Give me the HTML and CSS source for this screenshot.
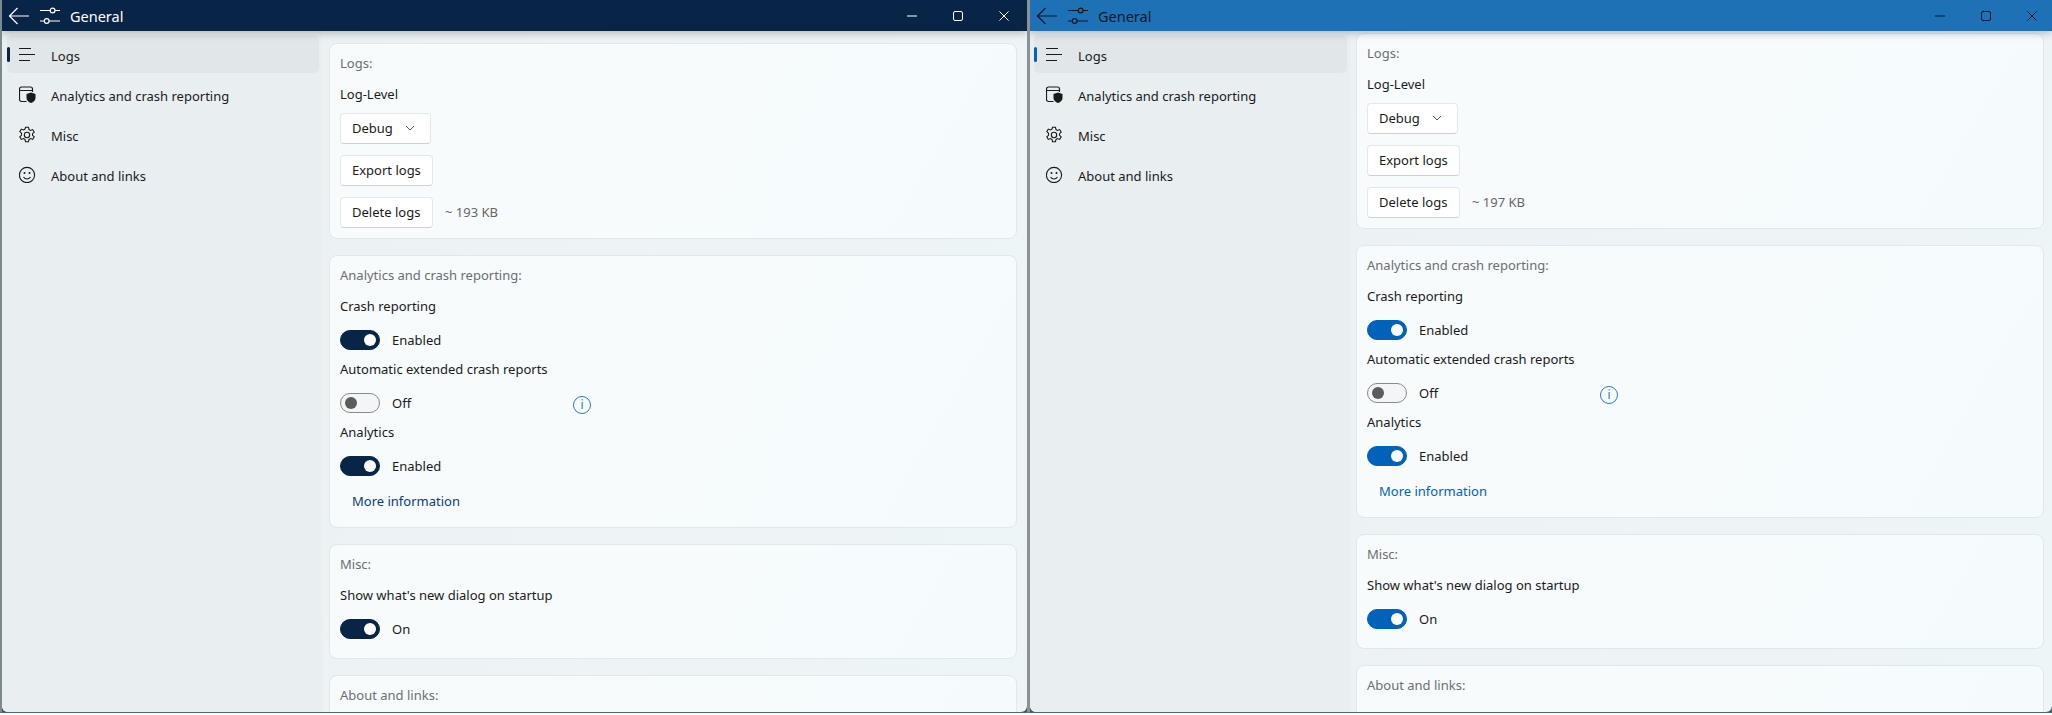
FILE: index.html
```html
<!DOCTYPE html>
<html lang="en">
<head>
    <meta charset="UTF-8">
    <meta name="viewport" content="width=device-width, initial-scale=1.0">
    <title>General</title>
    <link rel="stylesheet" href="styles.css">
</head>
<body>
    <svg class="icon-defs" width="0" height="0">
        <symbol id="i-back" viewBox="0 0 22 20"><path d="M21 10H1.500M9.500 2l-8 8 8 8" fill="none" stroke="currentColor" stroke-width="1.200"/></symbol>
        <symbol id="i-sliders" viewBox="0 0 22 20"><g fill="none" stroke="currentColor" stroke-width="1.200"><path d="M0 4.500h10.200M15 4.500h5M0 15h4.300M9.100 15h10.900"/><circle cx="12.600" cy="4.500" r="2.400"/><circle cx="6.700" cy="15" r="2.400"/></g></symbol>
        <symbol id="i-lines" viewBox="0 0 18 18"><path d="M0 3.500h12M0 9.500h16M0 15.500h11" fill="none" stroke="currentColor" stroke-width="1.100"/></symbol>
        <symbol id="i-shield" viewBox="1 -1 18 18"><path d="M8.500 15.500H3.500A2 2 0 0 1 1.500 13.500V3A2 2 0 0 1 3.500 1h9A2 2 0 0 1 14.500 3v3M1.500 4.500h13" fill="none" stroke="currentColor" stroke-width="1.200"/><path d="M13 6.500l4.500 1.500v4c0 2.500-2 4-4.500 5-2.500-1-4.500-2.500-4.500-5V8z" fill="currentColor"/></symbol>
        <symbol id="i-gear" viewBox="1 -1 18 18"><g fill="none" stroke="currentColor" stroke-width="1.100"><circle cx="9" cy="9" r="2.700"/><path d="M7.500 1.300h3l.5 2.300 1.500.8 2.200-.8 1.500 2.600-1.700 1.500v1.600l1.700 1.500-1.500 2.600-2.200-.8-1.500.8-.5 2.300h-3l-.5-2.300-1.500-.8-2.200.8-1.500-2.600 1.700-1.500V7.200L1.800 5.700l1.500-2.600 2.200.8 1.500-.8z"/></g></symbol>
        <symbol id="i-smile" viewBox="1 -1 18 18"><circle cx="9" cy="9" r="7.600" fill="none" stroke="currentColor" stroke-width="1.100"/><circle cx="6.500" cy="7" r="1" fill="currentColor"/><circle cx="11.500" cy="7" r="1" fill="currentColor"/><path d="M5.500 11c1 1.400 2.200 2 3.500 2s2.500-.6 3.500-2" fill="none" stroke="currentColor" stroke-width="1.100"/></symbol>
        <symbol id="i-min" viewBox="0 0 12 12"><path d="M1 6h10" stroke="currentColor" fill="none"/></symbol>
        <symbol id="i-max" viewBox="0 0 12 12"><rect x="1.500" y="1.500" width="9" height="9" rx="1.500" stroke="currentColor" fill="none"/></symbol>
        <symbol id="i-close" viewBox="0 0 12 12"><path d="M1.500 1.500l9 9M10.500 1.500l-9 9" stroke="currentColor" fill="none"/></symbol>
        <symbol id="i-chevron" viewBox="0 0 10 6"><path d="M1 1l4 4 4-4" stroke="currentColor" fill="none"/></symbol>
    </svg>

    <!-- dark theme accent window -->
    <div class="window win-dark">
        <header class="titlebar">
            <svg class="tb-icon"><use href="#i-back"/></svg>
            <svg class="tb-icon tb-last"><use href="#i-sliders"/></svg>
            <span class="tb-title">General</span>
            <div class="tb-buttons">
                <svg class="tb-btn"><use href="#i-min"/></svg>
                <svg class="tb-btn"><use href="#i-max"/></svg>
                <svg class="tb-btn"><use href="#i-close"/></svg>
            </div>
        </header>
        <div class="body-row">
            <nav class="sidebar">
                <div class="nav-item selected"><span class="nav-mark"></span><svg class="nav-icon"><use href="#i-lines"/></svg><span class="nav-text">Logs</span></div>
                <div class="nav-item"><svg class="nav-icon"><use href="#i-shield"/></svg><span class="nav-text">Analytics and crash reporting</span></div>
                <div class="nav-item"><svg class="nav-icon"><use href="#i-gear"/></svg><span class="nav-text">Misc</span></div>
                <div class="nav-item"><svg class="nav-icon"><use href="#i-smile"/></svg><span class="nav-text">About and links</span></div>
            </nav>
            <main class="content">
                <section class="card">
                    <div class="card-title">Logs:</div>
                    <div class="label">Log-Level</div>
                    <div class="btn combo">Debug<svg class="chevron"><use href="#i-chevron"/></svg></div>
                    <div class="btn">Export logs</div>
                    <div class="btn-row"><div class="btn">Delete logs</div><span class="size">~ 193 KB</span></div>
                </section>
                <section class="card">
                    <div class="card-title">Analytics and crash reporting:</div>
                    <div class="label">Crash reporting</div>
                    <div class="toggle-row"><span class="toggle on"></span>Enabled</div>
                    <div class="label tight">Automatic extended crash reports</div>
                    <div class="toggle-row"><span class="toggle"></span><span class="toggle-text">Off</span><span class="info">i</span></div>
                    <div class="label tight">Analytics</div>
                    <div class="toggle-row"><span class="toggle on"></span>Enabled</div>
                    <a class="link">More information</a>
                </section>
                <section class="card card-misc">
                    <div class="card-title">Misc:</div>
                    <div class="label">Show what's new dialog on startup</div>
                    <div class="toggle-row"><span class="toggle on"></span>On</div>
                </section>
                <section class="card card-about">
                    <div class="card-title">About and links:</div>
                </section>
            </main>
        </div>
    </div>

    <!-- blue accent window, scrolled down 10px -->
    <div class="window win-blue">
        <header class="titlebar">
            <svg class="tb-icon"><use href="#i-back"/></svg>
            <svg class="tb-icon tb-last"><use href="#i-sliders"/></svg>
            <span class="tb-title">General</span>
            <div class="tb-buttons">
                <svg class="tb-btn"><use href="#i-min"/></svg>
                <svg class="tb-btn"><use href="#i-max"/></svg>
                <svg class="tb-btn"><use href="#i-close"/></svg>
            </div>
        </header>
        <div class="body-row">
            <nav class="sidebar">
                <div class="nav-item selected"><span class="nav-mark"></span><svg class="nav-icon"><use href="#i-lines"/></svg><span class="nav-text">Logs</span></div>
                <div class="nav-item"><svg class="nav-icon"><use href="#i-shield"/></svg><span class="nav-text">Analytics and crash reporting</span></div>
                <div class="nav-item"><svg class="nav-icon"><use href="#i-gear"/></svg><span class="nav-text">Misc</span></div>
                <div class="nav-item"><svg class="nav-icon"><use href="#i-smile"/></svg><span class="nav-text">About and links</span></div>
            </nav>
            <main class="content">
                <section class="card">
                    <div class="card-title">Logs:</div>
                    <div class="label">Log-Level</div>
                    <div class="btn combo">Debug<svg class="chevron"><use href="#i-chevron"/></svg></div>
                    <div class="btn">Export logs</div>
                    <div class="btn-row"><div class="btn">Delete logs</div><span class="size">~ 197 KB</span></div>
                </section>
                <section class="card">
                    <div class="card-title">Analytics and crash reporting:</div>
                    <div class="label">Crash reporting</div>
                    <div class="toggle-row"><span class="toggle on"></span>Enabled</div>
                    <div class="label tight">Automatic extended crash reports</div>
                    <div class="toggle-row"><span class="toggle"></span><span class="toggle-text">Off</span><span class="info">i</span></div>
                    <div class="label tight">Analytics</div>
                    <div class="toggle-row"><span class="toggle on"></span>Enabled</div>
                    <a class="link">More information</a>
                </section>
                <section class="card card-misc">
                    <div class="card-title">Misc:</div>
                    <div class="label">Show what's new dialog on startup</div>
                    <div class="toggle-row"><span class="toggle on"></span>On</div>
                </section>
                <section class="card card-about">
                    <div class="card-title">About and links:</div>
                </section>
            </main>
        </div>
    </div>
</body>
</html>
```

FILE: styles.css
```css
html, body {
    height: 100%;
    margin: 0;
}
body {
    background-color: #fff;
    display: flex;
    font-family: "Noto Sans", Arial, sans-serif;
    font-size: 13px;
    color: #1a1a1a;
    overflow: hidden;
}
.icon-defs {
    position: absolute;
}
.window {
    height: 712px;
    display: flex;
    flex-direction: column;
    overflow: hidden;
    background-color: #3a5a66;
    border-bottom: 1px solid #50666e;
}
.win-dark {
    width: 1025px;
    border-left: 2px solid #7c8a90;
    border-right: 1px solid #8a9296;
    --accent: #082547;
    --bar: #082547;
    --bar-text: #fff;
    --link: #0f3d73;
    --btn-pad: 17px;
}
.win-blue {
    width: 1022px;
    border-left: 2px solid #8a9296;
    --accent: #0063b9;
    --bar: #1f71b5;
    --bar-text: #0a1a2a;
    --link: #0063b9;
    --btn-pad: 14px;
}

/* title bar */
.titlebar {
    height: 31px;
    flex: none;
    display: flex;
    align-items: center;
    background-color: var(--bar);
    color: var(--bar-text);
    padding-left: 6px;
    box-shadow: 0 2px 8px rgba(0, 0, 0, 0.25);
    position: relative;
    z-index: 1;
}
.tb-icon {
    width: 22px;
    height: 20px;
    margin-right: 10px;
}
.tb-last {
    margin-right: 8px;
}
.tb-title {
    font-size: 14.500px;
}
.tb-buttons {
    margin-left: auto;
    display: flex;
    gap: 34px;
    padding-right: var(--btn-pad);
}
.tb-btn {
    width: 12px;
    height: 12px;
}

/* sidebar */
.body-row {
    flex: 1;
    display: flex;
    min-height: 0;
    overflow: hidden;
    border-radius: 0 0 6px 6px;
    background: linear-gradient(100deg, #eaf0f2 0%, #eef3f5 60%, #edf5f7 100%);
}
.sidebar {
    width: 320px;
    flex: none;
    padding: 4px 3px 0 5px;
    box-sizing: border-box;
    background-color: #e9eff1;
}
.win-blue .sidebar {
    padding-left: 4px;
}
.nav-item {
    height: 38px;
    margin-bottom: 2px;
    display: flex;
    align-items: center;
    padding-left: 12px;
    border-radius: 5px;
    position: relative;
}
.nav-item.selected {
    background-color: #e1e7e9;
}
.nav-mark {
    position: absolute;
    left: 0;
    top: 12px;
    width: 3px;
    height: 15px;
    border-radius: 2px;
    background-color: var(--accent);
}
.nav-icon {
    width: 18px;
    height: 18px;
    margin-right: 14px;
}
.nav-text {
    padding-top: 4px;
}

/* content */
.content {
    flex: 1;
    padding: 12px 10px 0 7px;
    display: flex;
    flex-direction: column;
    gap: 16px;
    min-width: 0;
}
.win-blue .content {
    padding: 2px 8px 0 6px;
}
.card {
    flex: none;
    border: 1px solid #e0e8ea;
    border-radius: 8px;
    background: linear-gradient(120deg, #f8fbfc, #f5fbfd);
    padding: 9px 10px 10px;
    display: flex;
    flex-direction: column;
}
.card-misc {
    padding-bottom: 19px;
}
.card-about {
    min-height: 100px;
}
.card-title {
    color: #6b6f72;
    line-height: 20px;
    margin-bottom: 11px;
}
.label {
    line-height: 20px;
    margin-bottom: 9px;
}
.label.tight {
    margin-top: 9px;
}
.btn {
    align-self: flex-start;
    min-width: 93px;
    height: 31px;
    box-sizing: border-box;
    padding: 0 11px 2px;
    display: flex;
    align-items: center;
    background-color: #fff;
    border: 1px solid #e5e8ea;
    border-bottom-color: #cdd1d3;
    border-radius: 4px;
    margin-bottom: 11px;
}
.combo {
    min-width: 0;
    width: 91px;
}
.chevron {
    width: 10px;
    height: 6px;
    margin-left: auto;
    margin-right: 4px;
    color: #555;
}
.btn-row {
    display: flex;
    align-items: center;
}
.btn-row .btn {
    margin-bottom: 0;
}
.size {
    color: #666;
    margin-left: 12px;
    margin-bottom: 1px;
}
.toggle-row {
    height: 20px;
    margin-top: 5px;
    display: flex;
    align-items: center;
}
.toggle {
    width: 40px;
    height: 20px;
    box-sizing: border-box;
    border-radius: 10px;
    border: 1px solid #8a8a8a;
    background-color: #f3f5f6;
    margin-right: 12px;
    position: relative;
}
.toggle::after {
    content: "";
    position: absolute;
    left: 4px;
    top: 3px;
    width: 12px;
    height: 12px;
    border-radius: 50%;
    background-color: #5c5c5c;
}
.toggle.on {
    background-color: var(--accent);
    border-color: var(--accent);
}
.toggle.on::after {
    left: 23px;
    background-color: #fff;
}
.toggle-text {
    width: 181px;
}
.info {
    width: 18px;
    height: 18px;
    margin-top: 4px;
    box-sizing: border-box;
    border: 1.500px solid #3377bb;
    border-radius: 50%;
    color: #3377bb;
    font-size: 12px;
    line-height: 15px;
    text-align: center;
}
.link {
    color: var(--link);
    line-height: 20px;
    margin: 15px 0 6px 12px;
}
```
